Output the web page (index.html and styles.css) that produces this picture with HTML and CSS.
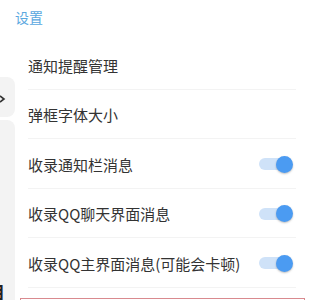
FILE: index.html
```html
<!DOCTYPE html>
<html lang="zh">
<head>
<meta charset="utf-8">
<link rel="stylesheet" href="styles.css">
</head>
<body>
<div class="backdrop">
  <div class="bg-card bg-card-small">
    <svg class="chev" width="8" height="10" viewBox="0 0 8 10"><path d="M1 2 L5 5 L1 8" fill="none" stroke="#333" stroke-width="1.6"/></svg>
  </div>
  <div class="bg-card bg-card-tall">
    <span class="bg-glyph">目</span>
  </div>
</div>
<div class="dialog">
  <div class="title">设置</div>
  <div class="list">
    <div class="row"><span>通知提醒管理</span></div>
    <div class="row"><span>弹框字体大小</span></div>
    <div class="row"><span>收录通知栏消息</span><span class="toggle"><span class="thumb"></span></span></div>
    <div class="row"><span>收录QQ聊天界面消息</span><span class="toggle"><span class="thumb"></span></span></div>
    <div class="row"><span>收录QQ主界面消息(可能会卡顿)</span><span class="toggle"><span class="thumb"></span></span></div>
  </div>
  <div class="input-box"></div>
</div>
</body>
</html>
```
FILE: styles.css
```css
html, body {
  margin: 0;
  padding: 0;
  background: #ffffff;
}
body {
  width: 326px;
  height: 300px;
  overflow: hidden;
  position: relative;
  font-family: "Noto Sans CJK SC", "Noto Sans", sans-serif;
}
.backdrop {
  position: absolute;
  left: 0;
  top: 0;
  width: 15px;
  height: 300px;
  display: flex;
  flex-direction: column;
  gap: 3px;
  padding-top: 77px;
  box-sizing: border-box;
  overflow: hidden;
}
.bg-card {
  margin-left: -20px;
  width: 35px;
  background: #f3f3f3;
  border-radius: 8px;
  flex-shrink: 0;
  display: flex;
}
.bg-card-small {
  height: 40px;
  align-items: center;
  padding-left: 19px;
  box-sizing: border-box;
}
.chev {
  display: block;
  margin-top: 4px;
}
.bg-card-tall {
  height: 220px;
  padding-left: 8px;
  box-sizing: border-box;
}
.bg-glyph {
  margin-top: 162px;
  font-size: 17px;
  line-height: 20px;
  color: #222;
  font-weight: bold;
}
.dialog {
  position: absolute;
  left: 15px;
  top: 0;
  width: 296px;
  height: 300px;
  background: #ffffff;
}
.title {
  height: 40px;
  box-sizing: border-box;
  padding-top: 7px;
  font-size: 14px;
  line-height: 20px;
  color: #5aa8e0;
}
.list {
  margin: 0 15px 0 13px;
}
.row {
  height: 48.5px;
  border-bottom: 1px solid #f3f3f3;
  display: flex;
  align-items: center;
  justify-content: space-between;
  font-size: 15px;
  color: #333333;
  padding-top: 2px;
  box-sizing: content-box;
}
.row {
  height: 46.5px;
}
.toggle {
  position: relative;
  width: 34px;
  height: 12px;
  margin-right: 3px;
}
.toggle::before {
  content: "";
  position: absolute;
  left: 0;
  top: 0;
  width: 30px;
  height: 12px;
  border-radius: 6px;
  background: #cfe2f8;
}
.thumb {
  position: absolute;
  right: 0;
  top: -2.5px;
  width: 17px;
  height: 17px;
  border-radius: 50%;
  background: #4b9bf2;
  box-shadow: 0 1px 2px rgba(0, 0, 0, 0.25);
}
.input-box {
  margin: 10px 6px 0 5px;
  height: 30px;
  border: 1px solid #d98a8f;
}
```
